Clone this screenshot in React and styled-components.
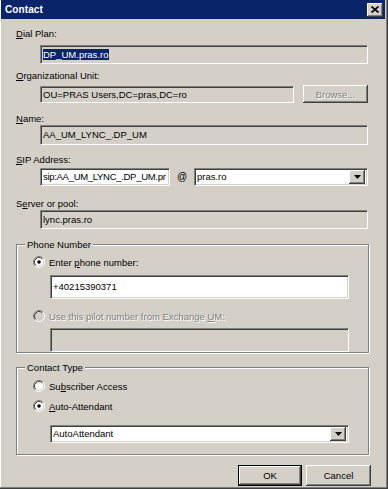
import React from 'react';
import styled, { createGlobalStyle } from 'styled-components';

const FACE = '#d4d0c8';
const SHADOW = '#808080';
const DARK = '#404040';
const NAVY = '#0a246a';

const GlobalStyle = createGlobalStyle`
  html, body {
    margin: 0;
    padding: 0;
    background: ${FACE};
  }
  body {
    font-family: "Liberation Sans", Arial, sans-serif;
    font-size: 9.5px;
    color: #000;
  }
`;

const Window = styled.div`
  width: 388px;
  height: 489px;
  box-sizing: border-box;
  padding: 0 3px 3px 1px;
  background: ${FACE};
  display: flex;
  flex-direction: column;
  box-shadow: inset -1px -1px 0 ${DARK}, inset -2px -2px 0 ${SHADOW}, inset 1px 0 0 #fff;
`;

const TitleBar = styled.div`
  height: 19px;
  flex: none;
  background: ${NAVY};
  display: flex;
  align-items: center;
  justify-content: space-between;
  padding: 0 2px 0 4px;
`;

const TitleText = styled.span`
  color: #fff;
  font-weight: bold;
  font-size: 10px;
  letter-spacing: 0.1px;
`;

const CloseButton = styled.div`
  width: 16px;
  height: 14px;
  box-sizing: border-box;
  background: ${FACE};
  display: flex;
  align-items: center;
  justify-content: center;
  box-shadow: inset -1px -1px 0 ${DARK}, inset 1px 1px 0 #fff, inset -2px -2px 0 ${SHADOW};
`;

const Body = styled.div`
  flex: 1;
  display: flex;
  flex-direction: column;
  padding: 8px 17px 0 15px;
`;

const Label = styled.div`
  height: 13px;
  line-height: 13px;
  margin-top: ${p => p.$mt || 0}px;
  color: ${p => (p.$disabled ? SHADOW : '#000')};
  text-shadow: ${p => (p.$disabled ? '1px 1px 0 #fff' : 'none')};
  white-space: nowrap;
`;

const Row = styled.div`
  display: flex;
  align-items: center;
  margin-top: ${p => p.$mt || 0}px;
  margin-left: ${p => p.$ml || 0}px;
`;

const Field = styled.div`
  box-sizing: border-box;
  height: ${p => p.$h || 17}px;
  width: ${p => (p.$w ? p.$w + 'px' : 'auto')};
  flex: ${p => (p.$w ? 'none' : '1')};
  margin-top: ${p => p.$mt || 0}px;
  margin-left: ${p => p.$ml || 0}px;
  background: ${p => (p.$white ? '#fff' : FACE)};
  border: 1px solid;
  border-color: ${SHADOW} #fff #fff ${SHADOW};
  box-shadow: inset 1px 1px 0 ${DARK}, inset -1px -1px 0 ${FACE};
  display: flex;
  align-items: center;
  padding: 0 0 0 2px;
  white-space: nowrap;
  overflow: hidden;
`;

const FieldText = styled.span`
  flex: 1;
  line-height: 13px;
  overflow: hidden;
  letter-spacing: ${p => p.$tight ? '-0.3px' : 'normal'};
`;

const Selected = styled.span`
  background: ${NAVY};
  color: #fff;
  padding: 0 1px 0 0;
`;

const ComboArrow = styled.div`
  flex: none;
  width: 16px;
  box-sizing: border-box;
  background: ${FACE};
  display: flex;
  align-items: center;
  justify-content: center;
  box-shadow: inset -1px -1px 0 ${DARK}, inset 1px 1px 0 #fff, inset -2px -2px 0 ${SHADOW};
`;

const Button = styled.div`
  box-sizing: border-box;
  width: ${p => p.$w}px;
  height: ${p => p.$h || 21}px;
  flex: none;
  margin-left: ${p => p.$ml || 0}px;
  background: ${FACE};
  display: flex;
  align-items: center;
  justify-content: center;
  color: ${p => (p.$disabled ? SHADOW : '#000')};
  text-shadow: ${p => (p.$disabled ? '1px 1px 0 #fff' : 'none')};
  border: ${p => (p.$default ? '1px solid #000' : 'none')};
  box-shadow: inset -1px -1px 0 ${DARK}, inset 1px 1px 0 #fff, inset -2px -2px 0 ${SHADOW};
`;

const At = styled.span`
  width: 24px;
  flex: none;
  text-align: center;
  font-size: 10px;
`;

const GroupBox = styled.div`
  position: relative;
  box-sizing: border-box;
  height: ${p => p.$h}px;
  margin-top: ${p => p.$mt || 0}px;
  margin-right: -1px;
  border: 1px solid ${SHADOW};
  box-shadow: inset 1px 1px 0 #fff, 1px 1px 0 #fff;
  display: flex;
  flex-direction: column;
  padding: ${p => p.$pt}px 19px 0 16px;
`;

const Legend = styled.span`
  position: absolute;
  top: -7px;
  left: 8px;
  padding: 0 2px;
  line-height: 13px;
  background: ${FACE};
`;

const RadioRow = styled.div`
  display: flex;
  align-items: center;
  height: 13px;
  margin-top: ${p => p.$mt || 0}px;
  gap: 4px;
`;

const ButtonBar = styled.div`
  display: flex;
  justify-content: flex-end;
  margin-top: 10px;
  margin-right: -3px;
`;

const Radio = ({ checked, disabled }) => (
  <svg width="12" height="12" viewBox="0 0 12 12" style={{ flex: 'none' }}>
    <circle cx="6" cy="6" r="4.5" fill={disabled ? FACE : '#fff'} />
    <path d="M2.11 9.89 A5.5 5.5 0 0 1 9.89 2.11" fill="none" stroke={SHADOW} strokeWidth="1" />
    <path d="M2.82 9.18 A4.5 4.5 0 0 1 9.18 2.82" fill="none" stroke={DARK} strokeWidth="1" />
    <path d="M9.89 2.11 A5.5 5.5 0 0 1 2.11 9.89" fill="none" stroke="#fff" strokeWidth="1" />
    <path d="M9.18 2.82 A4.5 4.5 0 0 1 2.82 9.18" fill="none" stroke={FACE} strokeWidth="1" />
    {checked && <circle cx="6" cy="6" r="1.8" fill={disabled ? SHADOW : '#000'} />}
  </svg>
);

const DownArrow = () => (
  <svg width="7" height="4" viewBox="0 0 7 4">
    <path d="M0 0 H7 L3.5 4 Z" fill="#000" />
  </svg>
);

const CloseGlyph = () => (
  <svg width="8" height="7" viewBox="0 0 8 7">
    <path d="M0.5 0.5 L7.5 6.5 M7.5 0.5 L0.5 6.5" stroke="#000" strokeWidth="1.6" />
  </svg>
);

const Combo = ({ value, h = 18 }) => (
  <Field $white $h={h} style={{ paddingRight: 2 }}>
    <FieldText>{value}</FieldText>
    <ComboArrow style={{ height: h - 4 }}>
      <DownArrow />
    </ComboArrow>
  </Field>
);

export default function App() {
  return (
    <>
      <GlobalStyle />
      <Window>
        <TitleBar>
          <TitleText>Contact</TitleText>
          <CloseButton>
            <CloseGlyph />
          </CloseButton>
        </TitleBar>
        <Body>
          <Label>
            <u>D</u>ial Plan:
          </Label>
          <Field $ml={24} $mt={5}>
            <FieldText>
              <Selected>DP_UM.pras.ro</Selected>
            </FieldText>
          </Field>

          <Label $mt={5}>
            <u>O</u>rganizational Unit:
          </Label>
          <Row $mt={3} $ml={24}>
            <Field $w={254}>
              <FieldText>OU=PRAS Users,DC=pras,DC=ro</FieldText>
            </Field>
            <Button $w={65} $h={18} $ml={9} $disabled>
              Browse...
            </Button>
          </Row>

          <Label $mt={9}>
            <u>N</u>ame:
          </Label>
          <Field $ml={24}>
            <FieldText>AA_UM_LYNC_.DP_UM</FieldText>
          </Field>

          <Label $mt={8}>
            <u>S</u>IP Address:
          </Label>
          <Row $mt={2} $ml={24}>
            <Field $white $w={130} $h={18}>
              <FieldText $tight>sip:AA_UM_LYNC_.DP_UM.pr</FieldText>
            </Field>
            <At>@</At>
            <Combo value="pras.ro" />
          </Row>

          <Label $mt={11}>
            S<u>e</u>rver or pool:
          </Label>
          <Field $ml={24}>
            <FieldText>lync.pras.ro</FieldText>
          </Field>

          <GroupBox $mt={15} $h={109} $pt={11}>
            <Legend>Phone Number</Legend>
            <RadioRow>
              <Radio checked />
              <span>
                Enter <u>p</u>hone number:
              </span>
            </RadioRow>
            <Field $white $mt={6} $ml={17} $h={18}>
              <FieldText>+40215390371</FieldText>
            </Field>
            <RadioRow $mt={11}>
              <Radio disabled />
              <Label $disabled>
                Use this pilot number from Exchange <u>U</u>M:
              </Label>
            </RadioRow>
            <Field $mt={5} $ml={17} $h={19} />
          </GroupBox>

          <GroupBox $mt={14} $h={88} $pt={12}>
            <Legend>Contact Type</Legend>
            <RadioRow>
              <Radio />
              <span>
                Su<u>b</u>scriber Access
              </span>
            </RadioRow>
            <RadioRow $mt={7}>
              <Radio checked />
              <span>
                <u>A</u>uto-Attendant
              </span>
            </RadioRow>
            <Row $mt={12} $ml={17}>
              <Combo value="AutoAttendant" />
            </Row>
          </GroupBox>

          <ButtonBar>
            <Button $w={64} $default>
              OK
            </Button>
            <Button $w={65} $ml={4}>
              Cancel
            </Button>
          </ButtonBar>
        </Body>
      </Window>
    </>
  );
}
